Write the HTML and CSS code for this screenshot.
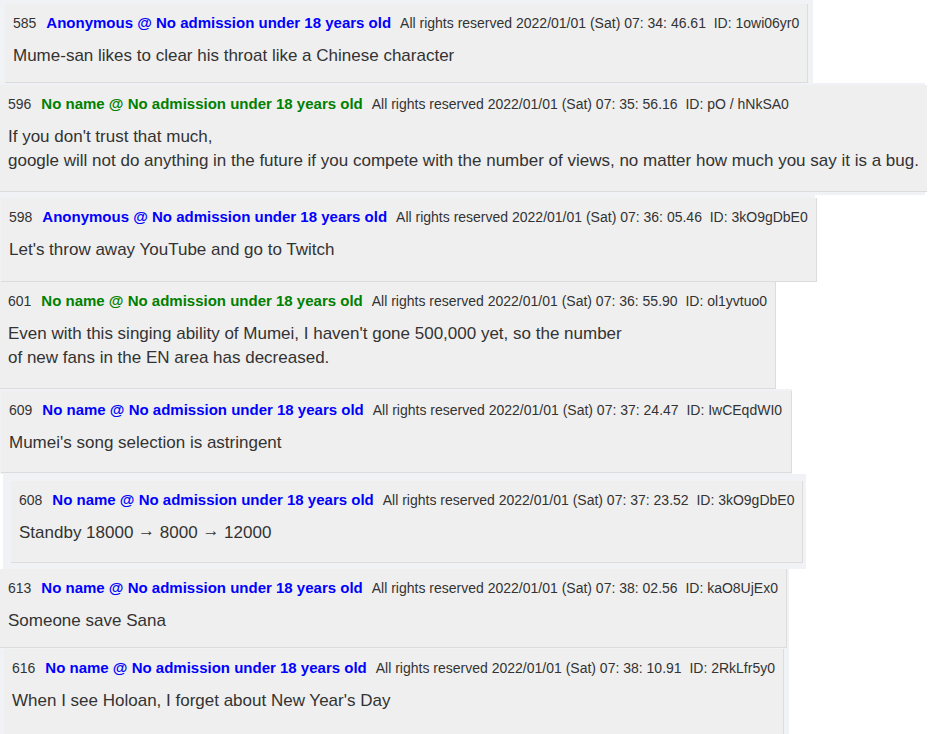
FILE: index.html
```html
<!DOCTYPE html>
<html lang="en">
<head>
<meta charset="utf-8">
<title>Thread</title>
<link rel="stylesheet" href="styles.css">
</head>
<body>
<div class="feed">
  <div class="shot s1">
    <div class="post">
      <div class="head"><span class="num">585</span><span class="name blue">Anonymous @ No admission under 18 years old</span><span class="meta">All rights reserved 2022/01/01 (Sat) 07: 34: 46.61 &nbsp;ID: 1owi06yr0</span></div>
      <div class="body">Mume-san likes to clear his throat like a Chinese character</div>
    </div>
  </div>
  <div class="shot s2">
    <div class="post">
      <div class="head"><span class="num">596</span><span class="name green">No name @ No admission under 18 years old</span><span class="meta">All rights reserved 2022/01/01 (Sat) 07: 35: 56.16 &nbsp;ID: pO / hNkSA0</span></div>
      <div class="body">If you don't trust that much,<br>google will not do anything in the future if you compete with the number of views, no matter how much you say it is a bug.</div>
    </div>
  </div>
  <div class="shot s3">
    <div class="post">
      <div class="head"><span class="num">598</span><span class="name blue">Anonymous @ No admission under 18 years old</span><span class="meta">All rights reserved 2022/01/01 (Sat) 07: 36: 05.46 &nbsp;ID: 3kO9gDbE0</span></div>
      <div class="body">Let's throw away YouTube and go to Twitch</div>
    </div>
  </div>
  <div class="shot s4">
    <div class="post">
      <div class="head"><span class="num">601</span><span class="name green">No name @ No admission under 18 years old</span><span class="meta">All rights reserved 2022/01/01 (Sat) 07: 36: 55.90 &nbsp;ID: ol1yvtuo0</span></div>
      <div class="body">Even with this singing ability of Mumei, I haven't gone 500,000 yet, so the number<br>of new fans in the EN area has decreased.</div>
    </div>
  </div>
  <div class="shot s5">
    <div class="post">
      <div class="head"><span class="num">609</span><span class="name blue">No name @ No admission under 18 years old</span><span class="meta">All rights reserved 2022/01/01 (Sat) 07: 37: 24.47 &nbsp;ID: IwCEqdWI0</span></div>
      <div class="body">Mumei's song selection is astringent</div>
    </div>
  </div>
  <div class="shot s6">
    <div class="post">
      <div class="head"><span class="num">608</span><span class="name blue">No name @ No admission under 18 years old</span><span class="meta">All rights reserved 2022/01/01 (Sat) 07: 37: 23.52 &nbsp;ID: 3kO9gDbE0</span></div>
      <div class="body">Standby 18000 <span class="arrow">→</span> 8000 <span class="arrow">→</span> 12000</div>
    </div>
  </div>
  <div class="shot s7">
    <div class="post">
      <div class="head"><span class="num">613</span><span class="name blue">No name @ No admission under 18 years old</span><span class="meta">All rights reserved 2022/01/01 (Sat) 07: 38: 02.56 &nbsp;ID: kaO8UjEx0</span></div>
      <div class="body">Someone save Sana</div>
    </div>
  </div>
  <div class="shot s8">
    <div class="post">
      <div class="head"><span class="num">616</span><span class="name blue">No name @ No admission under 18 years old</span><span class="meta">All rights reserved 2022/01/01 (Sat) 07: 38: 10.91 &nbsp;ID: 2RkLfr5y0</span></div>
      <div class="body">When I see Holoan, I forget about New Year's Day</div>
    </div>
  </div>
</div>
</body>
</html>
```
FILE: styles.css
```css
html, body {
  margin: 0;
  padding: 0;
  background: #ffffff;
}
body {
  font-family: "Liberation Sans", Arial, sans-serif;
  color: #333333;
  overflow: hidden;
}
.feed {
  display: flex;
  flex-direction: column;
  align-items: flex-start;
}
.shot {
  background: #f1f2f6;
  box-sizing: border-box;
  display: flex;
}
.post {
  flex: 1;
  box-sizing: border-box;
  background: #efefef;
  border-right: 1px solid #dcdcdc;
  border-bottom: 1px solid #dcdcdc;
  padding: 9px 8px 0 8px;
}
.head {
  display: flex;
  align-items: baseline;
  line-height: 20px;
  white-space: nowrap;
}
.num {
  font-size: 14px;
  margin-right: 10px;
}
.name {
  font-size: 15px;
  font-weight: bold;
  margin-right: 9px;
}
.blue { color: #0000ff; }
.green { color: #008000; }
.meta {
  font-size: 14px;
}
.body {
  font-size: 17px;
  line-height: 24px;
  margin-top: 11px;
  white-space: nowrap;
}
.arrow {
  position: relative;
  top: -2px;
}

.s1 { width: 813px; height: 83px; padding: 4px 6px 0 5px; }
.s2 { width: 925px; height: 112px; padding: 2px 0 3px 0; }
.s2 .post { border-right: none; }
.s3 { width: 815px; height: 87px; padding: 3px 0 0 1px; }
.s4 { width: 775px; height: 107px; padding: 0; }
.s5 { width: 792px; height: 85px; padding: 2px 0 1px 1px; }
.s6 { width: 803px; height: 95px; padding: 7px 3px 6px 8px; margin-left: 3px; }
.s7 { width: 789px; height: 79px; padding: 0 3px 0 0; }
.s8 { width: 789px; height: 88px; padding: 1px 6px 0 4px; }
.s8 .post { border-bottom: none; }
```
